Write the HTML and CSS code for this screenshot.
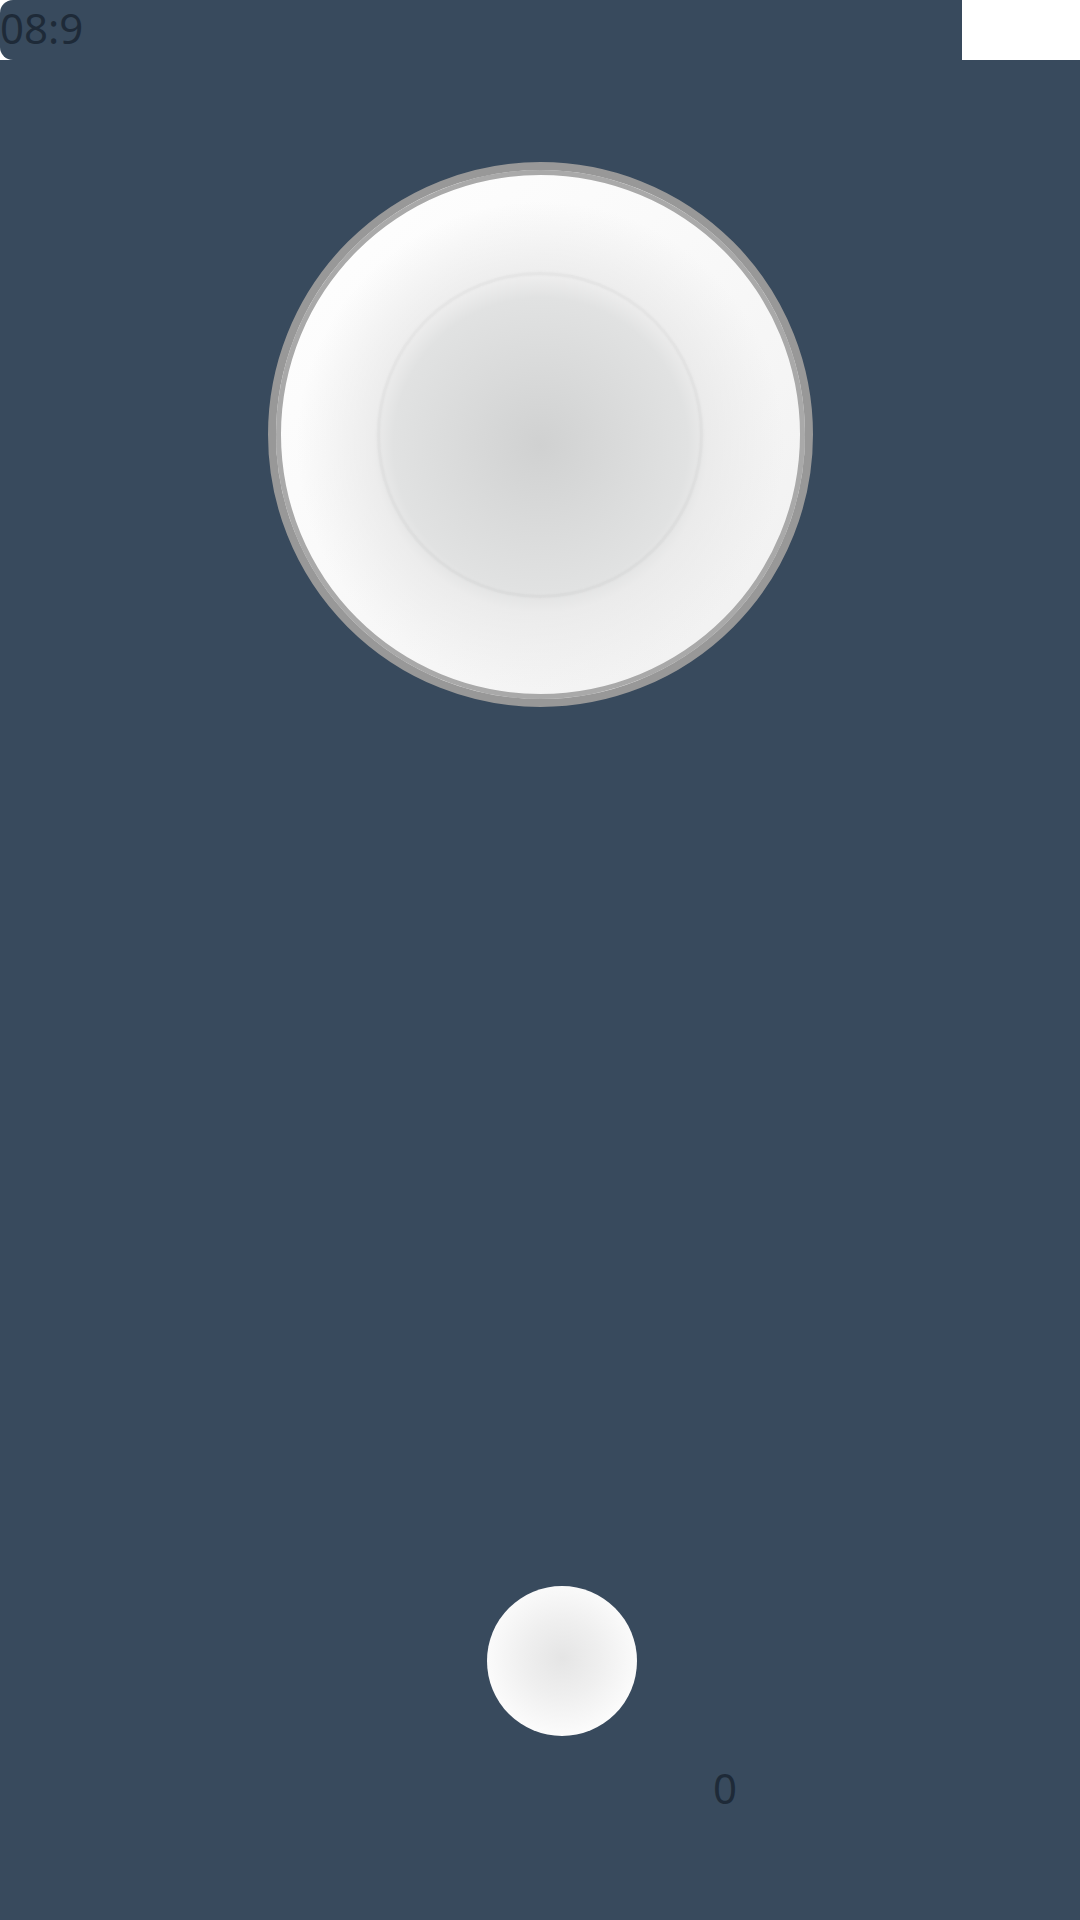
FILE: index.html
```html
<!DOCTYPE html>
<html>
<head>
<meta charset="utf-8">
<link rel="stylesheet" href="styles.css">
</head>
<body>
<div class="page">
  <header class="topbar">
    <span class="clock">08:9</span>
  </header>
  <main class="stage">
    <div class="dial">
      <div class="dial-inner"></div>
    </div>
    <div class="knob"></div>
    <div class="count">0</div>
  </main>
</div>
</body>
</html>
```

FILE: styles.css
```css
* { box-sizing: border-box; }
html, body {
  margin: 0;
  padding: 0;
  background: #ffffff;
  width: 1080px;
  height: 1920px;
  overflow: hidden;
}
.page {
  display: flex;
  flex-direction: column;
  width: 1080px;
  height: 1920px;
  font-family: "Noto Sans", "Open Sans", sans-serif;
}
.topbar {
  width: 962px;
  height: 60px;
  background: #384a5d;
  border-radius: 13px 0 0 13px;
  display: flex;
  align-items: flex-start;
}
.clock {
  font-size: 42px;
  line-height: 55px;
  color: #1e2a38;
}
.stage {
  flex: 1;
  background: #384a5d;
  display: flex;
  flex-direction: column;
  align-items: center;
  padding-top: 102px;
}
.dial {
  width: 545px;
  height: 545px;
  border-radius: 50%;
  border: 8px solid #989898;
  box-shadow: inset 0 0 0 5px #a9a9a9;
  background:
    radial-gradient(circle closest-side at 50% 52%, rgba(208, 209, 209, 1) 0%, rgba(217, 218, 218, 1) 30%, rgba(225, 226, 226, 1) 58%, rgba(232, 232, 232, 0.75) 66%, rgba(242, 242, 242, 0) 96%),
    linear-gradient(135deg, #ffffff 0%, #fafafa 40%, #efefef 100%);
  display: flex;
  align-items: center;
  justify-content: center;
}
.dial-inner {
  width: 326px;
  height: 326px;
  border-radius: 50%;
  border: 3px solid rgba(0, 0, 0, 0.03);
  box-shadow: 0 0 3px rgba(0, 0, 0, 0.035), inset 0 0 3px rgba(0, 0, 0, 0.035);
}
.knob {
  align-self: flex-start;
  margin-left: 487px;
  margin-top: 879px;
  width: 150px;
  height: 150px;
  border-radius: 50%;
  background: radial-gradient(circle at 50% 48%, #e5e5e5 0%, #efefef 35%, #fbfbfb 70%, #ffffff 100%);
}
.count {
  align-self: flex-start;
  margin-left: 713px;
  margin-top: 23px;
  font-size: 42px;
  line-height: 57px;
  color: #1e2a38;
}
```
